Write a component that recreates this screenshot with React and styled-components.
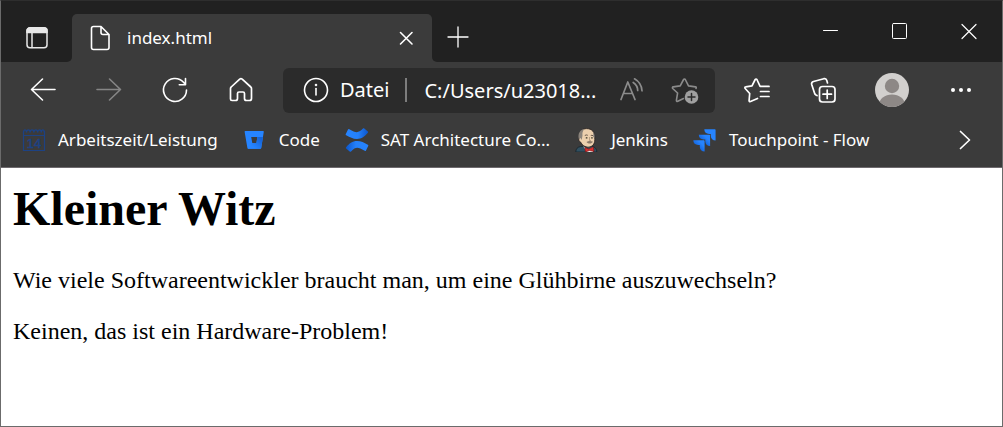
import React from 'react';
import styled, { createGlobalStyle } from 'styled-components';

const GlobalStyle = createGlobalStyle`
  * { box-sizing: border-box; }
  body { margin: 0; background: #fff; }
  button { border: 0; padding: 0; background: none; color: inherit; font: inherit; }
  svg { display: block; flex: none; }
`;

const Window = styled.div`
  min-height: 100vh;
  display: flex;
  flex-direction: column;
  border: 1px solid #6b6b6b;
  border-top-color: #2e2e2e;
  background: #fff;
`;

const Chrome = styled.header`
  background: #3b3b3b;
  color: #fff;
  border-bottom: 1px solid #6e6a6e;
  font-family: 'Noto Sans', 'Open Sans', sans-serif;
`;

const TabStrip = styled.div`
  display: flex;
  height: 61px;
`;

const StripStart = styled.div`
  width: 71px;
  display: flex;
  align-items: center;
  justify-content: center;
  padding-top: 13px;
  background: #212121;
  border-radius: 0 0 5px 0;
`;

const TabSlot = styled.div`
  flex: 0 1 360px;
  padding-top: 13px;
  background: linear-gradient(#212121 24px, #3b3b3b 24px);
`;

const Tab = styled.div`
  height: 48px;
  display: flex;
  align-items: center;
  padding: 0 13px 0 14px;
  gap: 13px;
  background: #3b3b3b;
  border-radius: 5px 5px 0 0;
`;

const TabTitle = styled.span`
  flex: 1;
  font-size: 17px;
  line-height: 24px;
`;

const StripEnd = styled.div`
  flex: 1;
  display: flex;
  justify-content: space-between;
  background: #212121;
  border-radius: 0 0 0 5px;
`;

const IconButton = styled.button`
  width: ${(p) => p.$width || 66}px;
  height: ${(p) => p.$height || 56}px;
  flex: none;
  display: flex;
  align-items: center;
  justify-content: center;
  color: ${(p) => p.$color || '#fff'};
`;

const NewTab = styled(IconButton)`
  margin-top: 12px;
`;

const WindowControls = styled.div`
  display: flex;
`;

const Toolbar = styled.div`
  display: flex;
  align-items: center;
  padding: 0 8px 0 9px;
  height: 56px;
`;

const AddressBar = styled.div`
  flex: 1;
  min-width: 0;
  height: 45px;
  margin: 0 9px;
  padding: 0 4px 0 19px;
  display: flex;
  align-items: center;
  background: #2b2b2b;
  border-radius: 6px;
  font-size: 20px;
`;

const Scheme = styled.label`
  margin-left: 10px;
  padding-right: 16px;
  border-right: 2px solid #7d7d7d;
  line-height: 24px;
`;

const AddressInput = styled.input`
  flex: 1;
  min-width: 0;
  margin-left: 17px;
  padding: 0;
  border: 0;
  outline: 0;
  background: transparent;
  color: #fff;
  font: inherit;
`;

const Favourites = styled.nav`
  display: flex;
  align-items: center;
  height: 49px;
  padding: 0 4px 6px 21px;
`;

const Favourite = styled.a`
  display: flex;
  align-items: center;
  gap: 12px;
  margin-right: 25px;
  color: #fff;
  text-decoration: none;
  white-space: nowrap;
  font-size: 17px;
  line-height: 24px;
`;

const Overflow = styled(IconButton)`
  margin-left: auto;
`;

const Page = styled.main`
  padding: 14px 12px;
  color: #000;
  font-family: 'Liberation Serif', 'Times New Roman', serif;
`;

const Heading = styled.h1`
  margin: 0 0 31px;
  font-size: 48px;
  line-height: 54px;
`;

const Paragraph = styled.p`
  margin: 0 0 24px;
  font-size: 24px;
  line-height: 27px;
`;

function Icon({ size = 28, sw = 2, children }) {
  return (
    <svg width={size} height={size} viewBox={`0 0 ${size} ${size}`} fill="none" stroke="currentColor"
      strokeWidth={sw} strokeLinecap="round" strokeLinejoin="round" aria-hidden="true">
      {children}
    </svg>
  );
}

const CalendarIcon = () => (
  <svg width="24" height="24" viewBox="0 0 24 24" fill="none" stroke="#1d4283" aria-hidden="true">
    <path d="M1.500 3v19.500h21V3M1 7.500h22" strokeWidth="1.200" />
    <path d="M1.500 4.500c0-3.500 3-3.500 3 0 0-3.500 3.600-3.500 3.600 0 0-3.500 3.800-3.500 3.800 0 0-3.500 3.800-3.500 3.800 0 0-3.500 3.600-3.500 3.600 0 0-3.500 3-3.500 3 0" strokeWidth="1.300" />
    <text x="12" y="20" textAnchor="middle" fontFamily="Liberation Sans, sans-serif" fontSize="13" fill="#1d4283" strokeWidth=".5">14</text>
  </svg>
);

const BitbucketIcon = () => (
  <svg width="24" height="24" viewBox="0 0 24 24" aria-hidden="true">
    <defs>
      <linearGradient id="bucket" x1="1" y1="0.3" x2="0.4" y2="0.9">
        <stop offset="0" stopColor="#1463d8" />
        <stop offset="1" stopColor="#2684ff" />
      </linearGradient>
    </defs>
    <path d="M2.200 3h18c.4 0 .7.4.6.8L18.200 20c-.1.5-.4.8-.9.8H5.400c-.5 0-.9-.3-1-.8L1.600 3.800c-.1-.4.2-.8.6-.8zm6 5.900 1.100 6h4.100l1-6z" fill="#2684ff" fillRule="evenodd" />
    <path d="M20 8.900h-5.600l-1 6h-4.100l-4.700 5.600c.2.200.5.3.8.3h11.900c.5 0 .8-.3.9-.8z" fill="url(#bucket)" />
  </svg>
);

const ConfluenceIcon = () => (
  <svg width="24" height="24" viewBox="0 0 24 24" aria-hidden="true">
    <defs>
      <linearGradient id="waveTop" x1="0" y1="0" x2="1" y2="0">
        <stop offset="0" stopColor="#2684ff" />
        <stop offset="0.55" stopColor="#2480fa" />
        <stop offset="1" stopColor="#0b55cb" />
      </linearGradient>
    </defs>
    <path id="wave" d="M4.300 1.200C3.700.9 3.300 1.100 3 1.600L.7 6.200c-.2.500 0 .9.500 1.100 4 2 6.500 3.700 10.700 3.700 5 0 7.700-2.500 11-6.200.4-.5.400-.9 0-1.300L19.300.6c-.4-.4-.9-.4-1.300 0C12.500 6 10.800 4.500 4.300 1.200z" fill="url(#waveTop)" />
    <use href="#wave" transform="rotate(180 12 12)" />
  </svg>
);

const JenkinsIcon = () => (
  <svg width="24" height="24" viewBox="0 0 24 24" aria-hidden="true">
    <path d="M.8 24c0-3 1.500-5 5-5.500l10-.5c3.500.5 6 2.500 6 6z" fill="#315061" stroke="#16242c" strokeWidth=".8" />
    <path d="M8 18 13 22l5-3v5h-6z" fill="#eee" />
    <path d="M4 10.500C3.500 4 7 .6 11.500.6c5.500 0 8.500 3.400 8.300 9.400.4 5-1.500 8-4.800 8.900-3.500 1-7.500-1-9-4.400-2-.8-2.500-2.500-2-4z" fill="#ecd0ae" stroke="#2a2320" strokeWidth=".9" />
    <path d="M3.800 11C2.800 6.500 4.200 3 8 1.300l1.500-.4C7.500 3 7.200 5 7.500 7.500L6.700 12 5.500 10z" fill="#8b847c" />
    <path d="M18.500 4c1 1.700 1.300 3.600 1 6l-1.200-1z" fill="#777" />
    <path d="M9.800 7.500q1.500-1 3-.2M15.800 7.500q1.200-.5 2.200.2" stroke="#5a4b40" strokeWidth=".9" fill="none" />
    <path d="M10.800 9.800h1.600M16.200 9.800h1.500" stroke="#332" strokeWidth="1.200" />
    <path d="M14.500 9v3.500h1.500" stroke="#a58b70" strokeWidth=".7" fill="none" />
    <path d="M11.500 14c2-1.500 4.500-1.300 6.500-.3-1.500 2.300-4.500 2.500-6.500.3z" fill="#8a7868" />
    <path d="m9.800 19.500 4 1.500 4.500-2 .7 4.500-4.500-1-4 1.500z" fill="#d92f2f" stroke="#761515" strokeWidth=".6" />
  </svg>
);

const JiraIcon = () => (
  <svg width="24" height="24" viewBox="0 0 24 24" aria-hidden="true">
    <defs>
      <linearGradient id="arrow" x1="1" y1="0" x2="0.2" y2="0.8">
        <stop offset="0.350" stopColor="#2684ff" />
        <stop offset="1" stopColor="#0b55cb" />
      </linearGradient>
      <path id="chevron" d="M11.300 1.300h10.500c.5 0 .8.300.8.800v10.500c-2.800 0-4.800-2-4.800-4.800V6h-1.700c-2.800 0-4.800-1.900-4.800-4.700z" />
    </defs>
    <use href="#chevron" fill="#2684ff" />
    <use href="#chevron" x="-5.500" y="5.500" fill="url(#arrow)" />
    <use href="#chevron" x="-11" y="11" fill="url(#arrow)" />
  </svg>
);

const favourites = [
  ['Arbeitszeit/Leistung', CalendarIcon],
  ['Code', BitbucketIcon],
  ['SAT Architecture Co...', ConfluenceIcon],
  ['Jenkins', JenkinsIcon],
  ['Touchpoint - Flow', JiraIcon],
];

export default function App() {
  return (
    <>
      <GlobalStyle />
      <Window>
        <Chrome>
          <TabStrip>
            <StripStart>
              <IconButton $width={48} $height={48} $color="#e8e8e8" aria-label="Tabaktionen">
                <Icon size={24} sw={1.500}>
                  <rect x="2" y="1.800" width="20" height="20" rx="3" />
                  <path d="M2 6.500V5a3 3 0 0 1 3-3h14a3 3 0 0 1 3 3v1.500z" fill="currentColor" />
                  <path d="M7 7v14.500" />
                </Icon>
              </IconButton>
            </StripStart>
            <TabSlot>
              <Tab>
                <Icon sw={1.600}>
                  <path d="M7.500 2.500H15l8 8V23.500a2 2 0 0 1-2 2H7.500a2 2 0 0 1-2-2V4.500a2 2 0 0 1 2-2zM15 2.500v6a2 2 0 0 0 2 2h6" />
                </Icon>
                <TabTitle>index.html</TabTitle>
                <IconButton $width={26} $height={26} aria-label="Tab schließen">
                  <Icon size={20} sw={1.600}><path d="m4.500 4.500 11.500 11.500M16 4.500 4.500 16" /></Icon>
                </IconButton>
              </Tab>
            </TabSlot>
            <StripEnd>
              <NewTab $width={52} $height={48} aria-label="Neuer Tab">
                <Icon size={24} sw={1.300}><path d="M12 2v20M2 12h20" /></Icon>
              </NewTab>
              <WindowControls>
                <IconButton $width={69} $height={60} aria-label="Minimieren">
                  <Icon size={20} sw={1}><path d="M3.500 9.500h14" /></Icon>
                </IconButton>
                <IconButton $width={69} $height={60} aria-label="Maximieren">
                  <Icon size={20} sw={1}><rect x="3.500" y="2.500" width="14" height="15" rx="1" /></Icon>
                </IconButton>
                <IconButton $width={69} $height={60} aria-label="Schließen">
                  <Icon size={20} sw={1.200}><path d="m4 3.500 14 14M18 3.500 4 17.500" /></Icon>
                </IconButton>
              </WindowControls>
            </StripEnd>
          </TabStrip>
          <Toolbar>
            <IconButton aria-label="Zurück">
              <Icon sw={1.600}><path d="M26 13.500H2.500M13.500 3 2.500 13.500 13.500 24" /></Icon>
            </IconButton>
            <IconButton $color="#868686" aria-label="Vorwärts">
              <Icon sw={1.600}><path d="M2 13.500h23.500M14.500 3l11 10.500-11 10.500" /></Icon>
            </IconButton>
            <IconButton aria-label="Aktualisieren">
              <Icon sw={1.600}>
                <path d="M25.500 14A11.500 11.500 0 1 1 22.500 6.200L24.500 8.500M24.500 2.500v6.200H18.300" />
              </Icon>
            </IconButton>
            <IconButton aria-label="Startseite">
              <Icon sw={1.700}>
                <path d="M5 24.500h3.500a2 2 0 0 0 2-2v-5a1.500 1.500 0 0 1 1.500-1.500h4a1.500 1.500 0 0 1 1.500 1.500v5a2 2 0 0 0 2 2h3a2 2 0 0 0 2-2V12.500a2 2 0 0 0-.7-1.500L15.200 3.100a2 2 0 0 0-2.500 0L4.200 11a2 2 0 0 0-.7 1.500v10.500a1.500 1.500 0 0 0 1.500 1.500z" />
              </Icon>
            </IconButton>
            <AddressBar>
              <Icon sw={1.600}>
                <circle cx="14" cy="14" r="11.500" />
                <path d="M14 12.500v6.500" />
                <circle cx="14" cy="9" r=".5" />
              </Icon>
              <Scheme htmlFor="address">Datei</Scheme>
              <AddressInput id="address" defaultValue="C:/Users/u23018..." />
              <IconButton $width={53} $height={44} $color="#8c8c8c" aria-label="Laut vorlesen">
                <Icon sw={1.700}>
                  <path d="M3 23.500 9.800 6 17 23.500M5.500 17.500h9M15.200 6.500q4.500 3 4.500 8M16.500 2.800q7 4 7.500 12" />
                </Icon>
              </IconButton>
              <IconButton $width={53} $height={44} $color="#8c8c8c" aria-label="Zu Favoriten hinzufügen">
                <Icon sw={1.600}>
                  <path d="M12.500 22.500 6.800 25.300c-.8.300-1.500-.1-1.400-1L6.600 17 1.700 12.500c-.6-.6-.3-1.500.5-1.600l7-1 3.400-6.400c.4-.7 1.300-.7 1.700 0L17.500 9.900l7 1c.8.100 1 .9.500 1.500" />
                  <circle cx="20.500" cy="21" r="6.800" fill="#a0a0a0" stroke="none" />
                  <path d="M20.500 17.500v7M17 21h7" stroke="#2b2b2b" strokeWidth="1.500" />
                </Icon>
              </IconButton>
            </AddressBar>
            <IconButton aria-label="Favoriten">
              <Icon sw={1.700}>
                <path d="M14.500 22.500 7.500 25.500c-.8.300-1.500-.1-1.400-1L6.700 17.500 2.200 12.500c-.6-.6-.3-1.500.5-1.600l6.300-1L12.200 3.500c.4-.7 1.300-.7 1.700 0l3.200 6.900H26M17.500 15.500H26M17.500 20.500H26" />
              </Icon>
            </IconButton>
            <IconButton aria-label="Sammlungen">
              <Icon sw={1.700}>
                <rect x="10.500" y="10.500" width="15.500" height="15.500" rx="3" />
                <path d="M18.200 14v8.500M14 18.200h8.500M8 19.500l-1-.5a3 3 0 0 1-1.500-2L2.700 8.500a2.500 2.500 0 0 1 1.800-3L14.800 2.700a2.500 2.500 0 0 1 3 1.800L18.500 7" />
              </Icon>
            </IconButton>
            <IconButton $width={72} aria-label="Profil">
              <svg width="34" height="34" viewBox="0 0 34 34" aria-hidden="true">
                <clipPath id="avatar"><circle cx="17" cy="17" r="17" /></clipPath>
                <g clipPath="url(#avatar)">
                  <rect width="34" height="34" fill="#d2d0ce" />
                  <circle cx="17" cy="13" r="7.200" fill="#8d8886" />
                  <ellipse cx="17" cy="32" rx="13" ry="10.500" fill="#8d8886" />
                </g>
              </svg>
            </IconButton>
            <IconButton aria-label="Einstellungen und mehr">
              <Icon>
                <g fill="currentColor" stroke="none">
                  <circle cx="6" cy="14" r="2" /><circle cx="14" cy="14" r="2" /><circle cx="22" cy="14" r="2" />
                </g>
              </Icon>
            </IconButton>
          </Toolbar>
          <Favourites aria-label="Favoritenleiste">
            {favourites.map(([name, Logo]) => (
              <Favourite key={name} href="#"><Logo />{name}</Favourite>
            ))}
            <Overflow $height={40} aria-label="Weitere Favoriten">
              <Icon sw={1.700}><path d="m9.500 5.500 9 8.500-9 8.500" /></Icon>
            </Overflow>
          </Favourites>
        </Chrome>
        <Page>
          <Heading>Kleiner Witz</Heading>
          <Paragraph>Wie viele Softwareentwickler braucht man, um eine Glühbirne auszuwechseln?</Paragraph>
          <Paragraph>Keinen, das ist ein Hardware-Problem!</Paragraph>
        </Page>
      </Window>
    </>
  );
}
